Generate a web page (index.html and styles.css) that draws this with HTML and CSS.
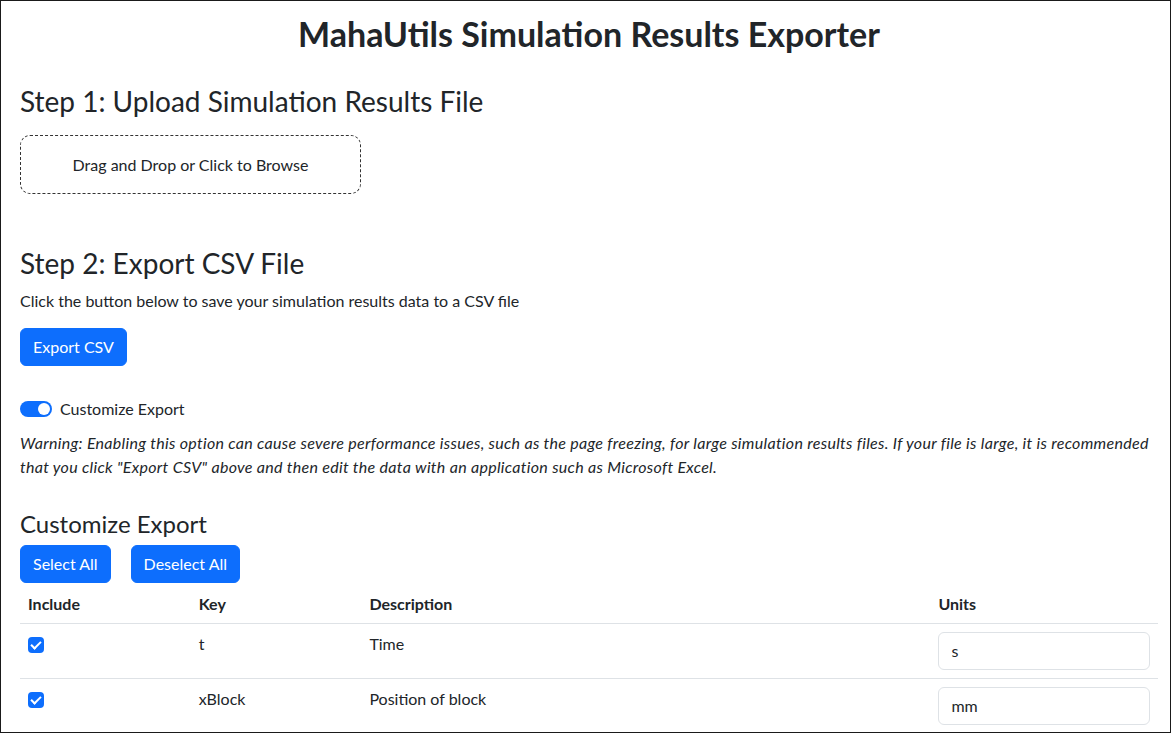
FILE: index.html
```html
<!DOCTYPE html>
<html lang="en">
<head>
    <meta charset="UTF-8">
    <meta name="viewport" content="width=device-width, initial-scale=1.0">
    <title>MahaUtils Simulation Results Exporter</title>
    <link rel="stylesheet" href="styles.css">
</head>
<body>
    <div class="page-frame">
        <div class="container">
            <h1 class="page-title">MahaUtils Simulation Results Exporter</h1>

            <!-- Step 1 -->
            <h3 class="step-title">Step 1: Upload Simulation Results File</h3>
            <div class="drop-zone">Drag and Drop or Click to Browse</div>

            <!-- Step 2 -->
            <h3 class="step-title step-two">Step 2: Export CSV File</h3>
            <p class="step-text">Click the button below to save your simulation results data to a CSV file</p>
            <button class="btn">Export CSV</button>

            <div class="form-switch">
                <span class="switch on"></span>
                <label>Customize Export</label>
            </div>
            <p class="warning">Warning: Enabling this option can cause severe performance issues, such as the page freezing, for large simulation results files. If your file is large, it is recommended that you click "Export CSV" above and then edit the data with an application such as Microsoft Excel.</p>

            <!-- Customize -->
            <h4 class="custom-title">Customize Export</h4>
            <div class="btn-row">
                <button class="btn">Select All</button>
                <button class="btn">Deselect All</button>
            </div>

            <table class="export-table">
                <thead>
                    <tr>
                        <th class="col-include">Include</th>
                        <th class="col-key">Key</th>
                        <th class="col-desc">Description</th>
                        <th class="col-units">Units</th>
                    </tr>
                </thead>
                <tbody>
                    <tr>
                        <td><span class="check"></span></td>
                        <td>t</td>
                        <td>Time</td>
                        <td><input class="form-control" type="text" value="s"></td>
                    </tr>
                    <tr>
                        <td><span class="check"></span></td>
                        <td>xBlock</td>
                        <td>Position of block</td>
                        <td><input class="form-control" type="text" value="mm"></td>
                    </tr>
                </tbody>
            </table>
        </div>
    </div>
</body>
</html>
```

FILE: styles.css
```css
html, body {
    margin: 0;
    height: 100%;
}

body {
    font-family: Lato, "Segoe UI", sans-serif;
    font-size: 16px;
    line-height: 1.5;
    color: #212529;
    background-color: #fff;
}

.page-frame {
    box-sizing: border-box;
    height: 733px;
    border: 1px solid #1a1a1a;
    overflow: hidden;
}

.container {
    padding: 0 12px 0 19px;
}

h1, h3, h4, p {
    margin: 0;
}

.page-title {
    text-align: center;
    font-size: 34px;
    font-weight: 700;
    line-height: 1.2;
    padding-top: 13px;
}

.step-title {
    font-size: 28px;
    font-weight: 400;
    line-height: 1.2;
    margin-top: 30px;
    margin-bottom: 17px;
}

.step-two {
    margin-top: 53px;
    margin-bottom: 8px;
}

.drop-zone {
    box-sizing: border-box;
    width: 341px;
    height: 59px;
    border: 1px dashed #333;
    border-radius: 10px;
    display: flex;
    align-items: center;
    justify-content: center;
}

.step-text {
    margin-bottom: 15px;
}

.btn {
    font-family: inherit;
    font-size: 16px;
    line-height: 1.5;
    color: #fff;
    background-color: #0d6efd;
    border: 1px solid #0d6efd;
    border-radius: 6px;
    padding: 6px 12px;
    cursor: pointer;
}

.btn:hover {
    background-color: #0b5ed7;
}

/* Toggle switch */
.form-switch {
    display: flex;
    align-items: center;
    gap: 8px;
    margin-top: 31px;
}

.switch {
    position: relative;
    display: inline-block;
    width: 32px;
    height: 16px;
    border-radius: 8px;
    background-color: #0d6efd;
}

.switch.on::after {
    content: "";
    position: absolute;
    right: 2px;
    top: 2px;
    width: 12px;
    height: 12px;
    border-radius: 50%;
    background-color: #fff;
}

.warning {
    font-style: italic;
    letter-spacing: 0.3px;
    margin-top: 10px;
}

.custom-title {
    font-size: 24px;
    font-weight: 400;
    line-height: 1.2;
    margin-top: 31px;
    margin-bottom: 6px;
}

.btn-row {
    display: flex;
    gap: 20px;
}

/* Table */
.export-table {
    width: 1138px;
    border-collapse: collapse;
    margin-top: 4px;
}

.export-table th,
.export-table td {
    text-align: left;
    vertical-align: top;
    padding: 8px;
    border-bottom: 1px solid #dee2e6;
}

.export-table th {
    padding-top: 5px;
    padding-bottom: 7px;
}

.col-include, .col-key { width: 15%; }
.col-desc { width: 50%; }
.col-units { width: 20%; }

.check {
    display: inline-block;
    vertical-align: top;
    width: 16px;
    height: 16px;
    margin-top: 5px;
    border-radius: 4px;
    background-color: #0d6efd;
    position: relative;
}

.check::after {
    content: "";
    position: absolute;
    left: 5px;
    top: 2px;
    width: 4px;
    height: 8px;
    border: solid #fff;
    border-width: 0 2px 2px 0;
    transform: rotate(45deg);
}

.form-control {
    box-sizing: border-box;
    width: 100%;
    font-family: inherit;
    font-size: 16px;
    line-height: 1.5;
    color: #212529;
    padding: 6px 12px;
    border: 1px solid #dee2e6;
    border-radius: 6px;
    height: 38px;
}
```
